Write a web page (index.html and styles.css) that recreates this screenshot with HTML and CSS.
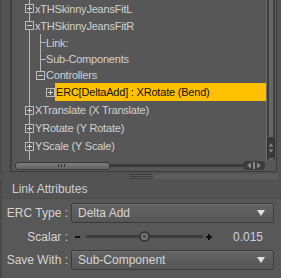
FILE: index.html
```html
<!DOCTYPE html>
<html>
<head>
<meta charset="utf-8">
<link rel="stylesheet" href="styles.css">
</head>
<body>
<div class="app">
  <div class="tree-panel">
    <div class="tree-frame">
      <div class="tree-main">
        <div class="tree">
          <div class="row r17"><span class="cell trunk"><span class="box plus"></span></span><span class="label">xTHSkinnyJeansFitL</span></div>
          <div class="row r17"><span class="cell trunk"><span class="box minus"></span></span><span class="label">xTHSkinnyJeansFitR</span></div>
          <div class="row r17"><span class="cell trunk"></span><span class="cell branch"></span><span class="label">Link:</span></div>
          <div class="row r16"><span class="cell trunk"></span><span class="cell branch"></span><span class="label">Sub-Components</span></div>
          <div class="row r16"><span class="cell trunk"></span><span class="cell uptail"><span class="box minus"></span></span><span class="label">Controllers</span></div>
          <div class="row r18"><span class="cell trunk"></span><span class="cell"></span><span class="cell narrow"><span class="box plus"></span></span><span class="label selected">ERC[DeltaAdd] : XRotate (Bend)</span></div>
          <div class="row r18"><span class="cell trunk"><span class="box plus"></span></span><span class="label">XTranslate (X Translate)</span></div>
          <div class="row r18"><span class="cell trunk"><span class="box plus"></span></span><span class="label">YRotate (Y Rotate)</span></div>
          <div class="row r18"><span class="cell trunk"><span class="box plus"></span></span><span class="label">YScale (Y Scale)</span></div>
          <div class="row r18"><span class="cell trunk"><span class="box plus"></span></span><span class="label">ZTranslate (Z Translate)</span></div>
        </div>
        <div class="vscroll">
          <div class="vthumb">
            <svg width="8" height="20" viewBox="0 0 8 20"><path d="M4 4 L7 8 L1 8 Z M1 12 L7 12 L4 16 Z" fill="#8a8a8a"/></svg>
          </div>
        </div>
      </div>
      <div class="hscroll-row">
        <div class="hscroll">
          <div class="hthumb"><span class="grip"></span></div>
          <div class="htrack"></div>
        </div>
        <div class="hnav">
          <svg width="22" height="9" viewBox="0 0 22 9"><path d="M4 4.5 L8 1.5 L8 7.5 Z M18 4.5 L14 1.5 L14 7.5 Z" fill="#8a8a8a"/><path d="M10.5 1 V8 M11.5 1 V8" stroke="#8a8a8a" stroke-width="1"/></svg>
        </div>
      </div>
    </div>
  </div>
  <div class="splitter"><span class="split-grip"></span></div>
  <div class="attr-panel">
    <div class="attr-title">Link Attributes</div>
    <div class="attr-body">
      <div class="field">
        <span class="field-label">ERC Type :</span>
        <div class="select"><span>Delta Add</span><span class="arrow"></span></div>
      </div>
      <div class="field slider-field">
        <span class="field-label">Scalar :</span>
        <div class="slider">
          <span class="minus-sign"></span>
          <div class="track"><span class="knob"></span></div>
          <span class="plus-sign"></span>
          <span class="value">0.015</span>
        </div>
      </div>
      <div class="field">
        <span class="field-label">Save With :</span>
        <div class="select"><span>Sub-Component</span><span class="arrow"></span></div>
      </div>
    </div>
  </div>
</div>
</body>
</html>
```

FILE: styles.css
```css
* { box-sizing: border-box; }
html, body { margin: 0; padding: 0; }
body {
  width: 281px;
  height: 278px;
  overflow: hidden;
  background: #535353;
  font-family: "Liberation Sans", Arial, sans-serif;
  font-size: 11px;
  letter-spacing: -0.2px;
  color: #d4d4d4;
}
.app { display: flex; flex-direction: column; height: 278px; }

/* ---------- tree panel ---------- */
.tree-panel {
  height: 174px;
  padding: 0 4px 2px 10px;
  border-left: 2px solid #4a4a4a;
}
.tree-panel { padding-left: 8px; }
.tree-frame {
  height: 172px;
  display: flex;
  flex-direction: column;
  border-left: 2px solid #404040;
  border-right: 1px solid #3c3c3c;
  border-bottom: 1px solid #3c3c3c;
  padding-left: 3px;
  background: #575757;
}
.tree-main { display: flex; height: 160px; overflow: hidden; }
.tree { width: 251px; padding-left: 9px; }
.row { display: flex; align-items: stretch; white-space: nowrap; }
.r16 { height: 16px; }
.r17 { height: 17px; }
.r18 { height: 18px; }
.cell {
  width: 11px;
  flex: none;
  display: flex;
  align-items: center;
  padding-left: 1px;
}
.cell.narrow { width: 9px; padding-left: 0; }
.trunk { background: linear-gradient(#b8b8b8, #b8b8b8) 5px 0 / 1px 100% no-repeat; }
.branch {
  background:
    linear-gradient(#b8b8b8, #b8b8b8) 5px 0 / 1px 100% no-repeat,
    linear-gradient(#b8b8b8, #b8b8b8) 5px 50% / 6px 1px no-repeat;
}
.uptail { background: linear-gradient(#b8b8b8, #b8b8b8) 5px 0 / 1px 50% no-repeat; }
.box {
  width: 9px;
  height: 9px;
  border: 1px solid #bdbdbd;
  background-color: #575757;
}
.box.plus {
  background:
    linear-gradient(#d0d0d0, #d0d0d0) 1px 3px / 5px 1px no-repeat,
    linear-gradient(#d0d0d0, #d0d0d0) 3px 1px / 1px 5px no-repeat,
    #575757;
}
.box.minus {
  background:
    linear-gradient(#d0d0d0, #d0d0d0) 1px 3px / 5px 1px no-repeat,
    #575757;
}
.label {
  flex: 1;
  display: flex;
  align-items: center;
  padding-left: 0;
  color: #d2d2d2;
}
.label.selected {
  background: #ffc000;
  color: #141000;
  padding-left: 1px;
}

.vscroll {
  width: 10px;
  flex: none;
  display: flex;
  flex-direction: column;
  justify-content: flex-end;
  padding: 0 1px 2px 0;
  border-left: 1px solid #6e6e6e;
  background: linear-gradient(90deg, #3e3e3e 0 2px, #676767 2px 6px, #404040 6px 8px, #5c5c5c 8px);
}
.vthumb {
  height: 21px;
  border-radius: 4px;
  background: #3b3b3b;
  border: 1px solid #2e2e2e;
  display: flex;
  align-items: center;
  justify-content: center;
}
.vthumb svg { display: block; }

.hscroll-row { height: 11px; display: flex; align-items: center; }
.hscroll { width: 228px; display: flex; align-items: center; }
.hthumb {
  width: 95px;
  height: 8px;
  border: 1px solid #3a3a3a;
  border-radius: 3px;
  background: linear-gradient(#7c7c7c, #646464);
  display: flex;
  justify-content: center;
  align-items: center;
}
.grip {
  width: 9px;
  height: 3px;
  background: repeating-linear-gradient(90deg, #333 0 1px, transparent 1px 3px);
}
.htrack { flex: 1; height: 3px; background: #3a3a3a; }
.hnav {
  width: 22px;
  height: 9px;
  border-radius: 4px;
  background: #3b3b3b;
  display: flex;
}
.hnav svg { display: block; }

/* ---------- splitter ---------- */
.splitter {
  height: 5px;
  margin: 0 3px 0 130px;
  background: #5d5d5d;
  display: flex;
}
.split-grip {
  width: 23px;
  background: repeating-linear-gradient(#3e3e3e 0 1px, #5a5a5a 1px 2px);
}

/* ---------- attributes ---------- */
.attr-panel { flex: 1; display: flex; flex-direction: column; border-left: 2px solid #4a4a4a; }
.attr-title {
  height: 19px;
  padding-left: 10px;
  display: flex;
  align-items: center;
  color: #cdd0d6;
  font-size: 12px;
  letter-spacing: 0;
}
.attr-body {
  flex: 1;
  padding: 4px 7px 0 0;
  display: flex;
  flex-direction: column;
  background: #585858;
  border-top: 1px solid #4c4c4c;
}
.field {
  display: grid;
  grid-template-columns: 66px 1fr;
  column-gap: 3px;
  align-items: center;
  height: 20px;
}
.slider-field { height: 27px; }
.field-label { text-align: right; color: #d4d4d4; font-size: 12px; letter-spacing: 0; }
.select {
  height: 20px;
  display: flex;
  align-items: center;
  justify-content: space-between;
  padding: 0 8px 0 6px;
  border: 1px solid #3c3c3c;
  border-radius: 2px;
  background: linear-gradient(#646464, #565656);
  box-shadow: inset 0 1px 0 #6e6e6e;
  color: #d6d6d6;
  font-size: 12px;
  letter-spacing: 0;
}
.arrow {
  width: 0;
  height: 0;
  border-left: 4px solid transparent;
  border-right: 4px solid transparent;
  border-top: 6px solid #e0e0e0;
}
.slider { display: flex; align-items: center; height: 27px; padding-left: 4px; }
.minus-sign { width: 5px; height: 2px; background: #111; }
.track {
  width: 117px;
  height: 3px;
  margin-left: 6px;
  background: #3c3c3c;
  display: flex;
  align-items: center;
  padding-left: 53px;
}
.knob {
  width: 11px;
  height: 11px;
  border-radius: 50%;
  border: 2px solid #3a3a3a;
  background: radial-gradient(circle, #4a4a4a 0 1.5px, #7a7a7a 2px);
  flex: none;
}
.plus-sign {
  width: 6px;
  height: 6px;
  margin-left: 3px;
  background:
    linear-gradient(#111, #111) 0 2px / 6px 2px no-repeat,
    linear-gradient(#111, #111) 2px 0 / 2px 6px no-repeat;
}
.value { margin-left: 21px; color: #c8d2e0; font-size: 12px; letter-spacing: 0; }
```
